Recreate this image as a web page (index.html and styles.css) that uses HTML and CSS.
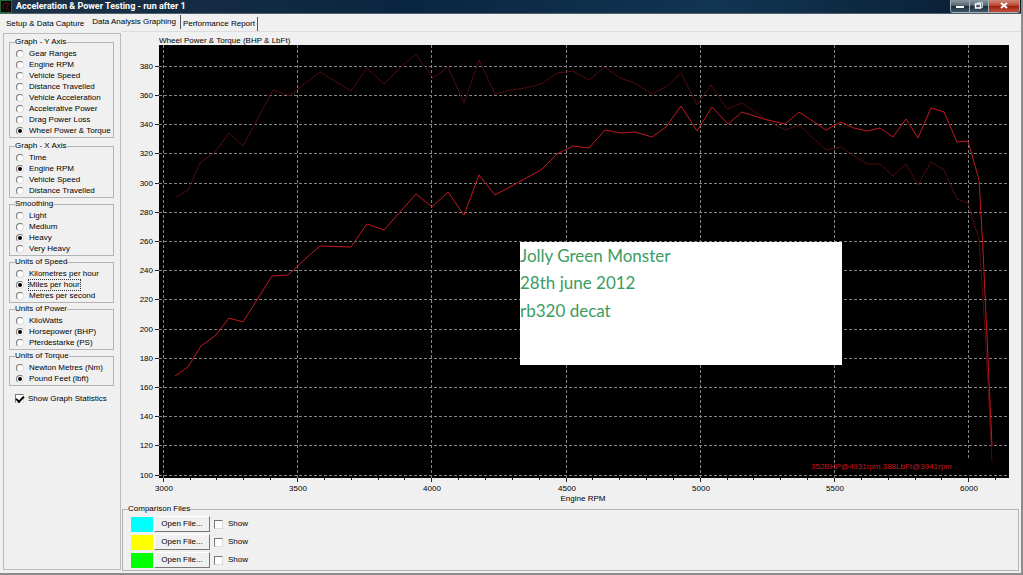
FILE: index.html
```html
<!DOCTYPE html>
<html lang="en">
<head>
    <meta charset="UTF-8">
    <meta name="viewport" content="width=device-width, initial-scale=1.0">
    <title>Acceleration &amp; Power Testing - run after 1</title>
    <link rel="stylesheet" href="styles.css">
</head>
<body>
    <!-- Title bar -->
    <header class="titlebar">
        <svg class="app-icon" width="12" height="13" viewBox="0 0 12 13">
            <rect x="0.5" y="0.5" width="11" height="12" fill="#0a0808" stroke="#1d6a35"/>
            <path d="M3 9V5L5 3H8V6L6 8L9 10" fill="none" stroke="#5c1519"/>
        </svg>
        <h1>Acceleration &amp; Power Testing - run after 1</h1>
        <div class="window-buttons">
            <button type="button" aria-label="Minimize">
                <svg width="18" height="12" viewBox="0 0 18 12"><rect x="5" y="6" width="8" height="2" fill="#fff"/></svg>
            </button>
            <button type="button" aria-label="Restore">
                <svg width="18" height="12" viewBox="0 0 18 12"><path d="M7.500 4V2.500H12.500V7.500H11" fill="none" stroke="#b9d3d8"/><rect x="5.500" y="4" width="5" height="4" fill="#456" stroke="#fff" stroke-width="1.500"/></svg>
            </button>
            <button type="button" class="close" aria-label="Close">
                <svg width="30" height="12" viewBox="0 0 30 12"><path d="M12 3L18 8M18 3L12 8" stroke="#fff" stroke-width="2"/></svg>
            </button>
        </div>
    </header>

    <nav class="tabs">
        <button type="button">Setup &amp; Data Capture</button>
        <button type="button" class="active">Data Analysis Graphing</button>
        <button type="button">Performance Report</button>
    </nav>

    <main class="content">
        <!-- Graph options -->
        <form class="sidebar">
            <fieldset class="long">
                <legend>Graph - Y Axis</legend>
                <label><input type="radio" name="yaxis">Gear Ranges</label>
                <label><input type="radio" name="yaxis">Engine RPM</label>
                <label><input type="radio" name="yaxis">Vehicle Speed</label>
                <label><input type="radio" name="yaxis">Distance Travelled</label>
                <label><input type="radio" name="yaxis">Vehicle Acceleration</label>
                <label><input type="radio" name="yaxis">Accelerative Power</label>
                <label><input type="radio" name="yaxis">Drag Power Loss</label>
                <label><input type="radio" name="yaxis" checked>Wheel Power &amp; Torque</label>
            </fieldset>
            <fieldset>
                <legend>Graph - X Axis</legend>
                <label><input type="radio" name="xaxis">Time</label>
                <label><input type="radio" name="xaxis" checked>Engine RPM</label>
                <label><input type="radio" name="xaxis">Vehicle Speed</label>
                <label><input type="radio" name="xaxis">Distance Travelled</label>
            </fieldset>
            <fieldset>
                <legend>Smoothing</legend>
                <label><input type="radio" name="smoothing">Light</label>
                <label><input type="radio" name="smoothing">Medium</label>
                <label><input type="radio" name="smoothing" checked>Heavy</label>
                <label><input type="radio" name="smoothing">Very Heavy</label>
            </fieldset>
            <fieldset>
                <legend>Units of Speed</legend>
                <label><input type="radio" name="speed">Kilometres per hour</label>
                <label><input type="radio" name="speed" checked><span class="focused">Miles per hour</span></label>
                <label><input type="radio" name="speed">Metres per second</label>
            </fieldset>
            <fieldset>
                <legend>Units of Power</legend>
                <label><input type="radio" name="power">KiloWatts</label>
                <label><input type="radio" name="power" checked>Horsepower (BHP)</label>
                <label><input type="radio" name="power">Pferdestarke (PS)</label>
            </fieldset>
            <fieldset>
                <legend>Units of Torque</legend>
                <label><input type="radio" name="torque">Newton Metres (Nm)</label>
                <label><input type="radio" name="torque" checked>Pound Feet (lbft)</label>
            </fieldset>
            <label class="statistics"><input type="checkbox" checked>Show Graph Statistics</label>
        </form>

        <div class="workspace">
            <!-- 500 rpm = 134px, 20 units = 29px -->
            <svg class="chart" viewBox="121 32 900 472" role="img" aria-label="Wheel power and torque against engine RPM">
                <rect x="159" y="45" width="850" height="433" fill="#000"/>
                <path class="grid" d="M159 66.500H1009M159 95.500H1009M159 124.500H1009M159 153.500H1009M159 183.500H1009M159 212.500H1009M159 241.500H1009M159 270.500H1009M159 299.500H1009M159 329.500H1009M159 358.500H1009M159 387.500H1009M159 416.500H1009M159 445.500H1009M159 475.500H1009"/>
                <path class="grid" d="M163.500 45V478M297.500 45V478M431.500 45V478M566.500 45V478M700.500 45V478M834.500 45V478M968.500 45V460"/>
                <path class="ticks" d="M155 66.500H159M155 95.500H159M155 124.500H159M155 153.500H159M155 183.500H159M155 212.500H159M155 241.500H159M155 270.500H159M155 299.500H159M155 329.500H159M155 358.500H159M155 387.500H159M155 416.500H159M155 445.500H159M155 475.500H159"/>
                <path class="ticks" d="M163.500 478V482M297.500 478V482M431.500 478V482M566.500 478V482M700.500 478V482M834.500 478V482M968.500 478V482"/>
                <path class="ticks" d="M190.500 478V480M216.500 478V480M243.500 478V480M270.500 478V480M324.500 478V480M351.500 478V480M378.500 478V480M404.500 478V480M458.500 478V480M485.500 478V480M512.500 478V480M539.500 478V480M592.500 478V480M619.500 478V480M646.500 478V480M673.500 478V480M727.500 478V480M753.500 478V480M780.500 478V480M807.500 478V480M861.500 478V480M888.500 478V480M915.500 478V480M941.500 478V480M995.500 478V480"/>

                <polyline class="torque" points="176,197 188,190 200,163 215,152 229,133 243,146 273,90 290,96 304,84 320,72 351,91 367,68 384,84 400,68 416,54 433,78 448,67 464,103 479,60 495,94 510,90 525,88 541,84 557,73 573,71 589,80 605,67 620,78 635,83 652,94 667,86 681,73 697,105 711,85 727,109 742,103 768,121 785,130 799,125 826,150 841,147 857,158 867,164 880,164 893,176 906,164 918,185 931,162 944,170 957,199 968,203 979,240 985,330 992,461"/>
                <polyline class="power" points="175,376 188,367 201,346 216,335 229,318 243,322 272,276 288,275 304,260 320,246 351,247 367,224 384,230 416,194 432,207 448,192 464,215 479,175 495,195 541,170 557,154 573,146 589,148 605,130 621,133 635,132 652,137 666,127 681,106 697,131 712,107 728,124 742,112 764,119 785,124 799,112 826,130 841,122 854,128 867,131 880,128 893,137 906,119 918,138 931,108 944,112 957,142 968,141 979,180 983,250 992,446"/>

                <text x="159" y="43">Wheel Power &amp; Torque (BHP &amp; LbFt)</text>
                <g text-anchor="end">
                    <text x="153" y="69">380</text>
                    <text x="153" y="98">360</text>
                    <text x="153" y="127">340</text>
                    <text x="153" y="156">320</text>
                    <text x="153" y="186">300</text>
                    <text x="153" y="215">280</text>
                    <text x="153" y="244">260</text>
                    <text x="153" y="273">240</text>
                    <text x="153" y="302">220</text>
                    <text x="153" y="332">200</text>
                    <text x="153" y="361">180</text>
                    <text x="153" y="390">160</text>
                    <text x="153" y="419">140</text>
                    <text x="153" y="448">120</text>
                    <text x="153" y="478">100</text>
                </g>
                <g text-anchor="middle">
                    <text x="164" y="491">3000</text>
                    <text x="298" y="491">3500</text>
                    <text x="432" y="491">4000</text>
                    <text x="567" y="491">4500</text>
                    <text x="701" y="491">5000</text>
                    <text x="835" y="491">5500</text>
                    <text x="969" y="491">6000</text>
                    <text x="583" y="501">Engine RPM</text>
                </g>
                <text class="stats" x="811" y="469">352BHP@4931rpm 388LbFt@3941rpm  .</text>

                <!-- Run notes -->
                <rect x="520" y="242" width="322" height="123" fill="#fff"/>
                <g class="note">
                    <text x="520" y="262">Jolly Green Monster</text>
                    <text x="520" y="289">28th june 2012</text>
                    <text x="520" y="317">rb320 decat</text>
                </g>
            </svg>

            <fieldset class="comparison">
                <legend>Comparison Files</legend>
                <div class="file-row">
                    <span class="swatch cyan"></span>
                    <button type="button">Open File...</button>
                    <label><input type="checkbox">Show</label>
                </div>
                <div class="file-row">
                    <span class="swatch yellow"></span>
                    <button type="button">Open File...</button>
                    <label><input type="checkbox">Show</label>
                </div>
                <div class="file-row">
                    <span class="swatch green"></span>
                    <button type="button">Open File...</button>
                    <label><input type="checkbox">Show</label>
                </div>
            </fieldset>
        </div>
    </main>
</body>
</html>
```
FILE: styles.css
```css
* {
    box-sizing: border-box;
}
body {
    margin: 0;
    min-height: 100vh;
    display: flex;
    flex-direction: column;
    background: #f0f0f0;
    border-right: 2px solid #8c8c8c;
    border-bottom: 2px solid #8c8c8c;
    color: #000;
    font-family: "Liberation Sans", Arial, sans-serif;
    font-size: 8px;
    line-height: 10px;
}
button {
    font: inherit;
    color: inherit;
}

/* Title bar */
.titlebar {
    display: flex;
    align-items: center;
    height: 14px;
    margin-right: -2px;
    background: linear-gradient(90deg, #1d3347, #0a2540 40%, #123552 70%, #081c30);
    border-bottom: 1px solid #50606c;
}
.titlebar h1 {
    flex: 1;
    margin: 0 0 0 4px;
    color: #fff;
    font-family: "Roboto", sans-serif;
    font-size: 9px;
    font-weight: 700;
    line-height: 13px;
}
.window-buttons {
    display: flex;
    align-self: flex-start;
    margin-right: 3px;
    border: 1px solid #a3adb3;
    border-top: 0;
    border-radius: 0 0 3px 3px;
    overflow: hidden;
}
.window-buttons button {
    display: flex;
    padding: 0;
    border: 0;
    border-right: 1px solid #a3adb3;
    background: linear-gradient(#8d98a2, #596875 45%, #182b3b 50%, #3e5868);
}
.window-buttons .close {
    border-right: 0;
    background: linear-gradient(#d08a7c, #bd4a35 45%, #9c1e0c 50%, #c4503a);
}

/* Tabs */
.tabs {
    display: flex;
    height: 19px;
    padding-left: 4px;
}
.tabs button {
    height: 14px;
    margin-top: 3px;
    padding: 0 2px;
    border: 0;
    background: none;
}
.tabs .active {
    margin-top: 1px;
    padding: 0 4px 0 6px;
    border-right: 1px solid #555;
}
.tabs button:last-child {
    border-right: 1px solid #555;
}

/* Sidebar */
.content {
    flex: 1;
    display: flex;
}
.sidebar {
    display: flex;
    flex-direction: column;
    gap: 1px;
    width: 118px;
    margin: 0 0 3px 3px;
    padding: 3px 6px 0 5px;
    border: 1px solid #bbb;
}
fieldset {
    margin: 0;
    padding: 1px 0 1px 6px;
    border: 1px solid #b4b4b4;
    min-width: 0;
}
legend {
    height: 10px;
    margin-left: -1px;
    padding: 0;
}
.long {
    margin-bottom: 2px;
}
label {
    display: flex;
    align-items: center;
    height: 11px;
    white-space: nowrap;
}
input {
    appearance: none;
    display: grid;
    place-items: center;
    flex-shrink: 0;
    width: 9px;
    height: 9px;
    margin: 0 4px 0 0;
    background: #fff;
    border: 1px solid;
    border-color: #777 #ddd #ddd #777;
}
input[type="radio"] {
    width: 8px;
    height: 8px;
    margin-right: 5px;
    border-radius: 50%;
}
input[type="radio"]:checked::before {
    content: "";
    width: 4px;
    height: 4px;
    border-radius: 50%;
    background: #000;
}
input[type="checkbox"]:checked::before {
    content: "";
    width: 6px;
    height: 3px;
    border: solid #000;
    border-width: 0 0 2px 2px;
    transform: rotate(-45deg);
}
.focused {
    outline: 1px dotted #333;
}
.statistics {
    margin: 6px 0 0 6px;
}

/* Graph */
.workspace {
    flex: 1;
    min-width: 0;
}
.chart {
    display: block;
    width: 100%;
    margin-top: -2px;
    border-top: 1px solid #ddd;
}
.grid {
    fill: none;
    stroke: #858585;
    stroke-dasharray: 3 2;
}
.ticks {
    stroke: #222;
}
.power,
.torque {
    fill: none;
    stroke: #c41822;
}
.torque {
    stroke: #520b0e;
}
.chart .stats {
    fill: #c8141f;
}
.chart .note text {
    fill: #3a9c60;
    font-family: "Lato", sans-serif;
    font-size: 17px;
}

/* Comparison files */
.comparison {
    margin: 0 2px 0 1px;
    padding: 1px 0 1px 8px;
}
.comparison legend {
    margin-left: -3px;
}
.file-row {
    display: flex;
    align-items: center;
    height: 18px;
}
.file-row button {
    width: 56px;
    height: 16px;
    margin: 0 4px 0 1px;
    padding: 0;
    background: #f0f0f0;
    border: 1px solid;
    border-color: #fff #777 #777 #fff;
}
.file-row input {
    margin-right: 5px;
}
.swatch {
    width: 22px;
    height: 15px;
}
.cyan {
    background: #0ff;
}
.yellow {
    background: #ff0;
}
.green {
    background: #0f0;
}
```
